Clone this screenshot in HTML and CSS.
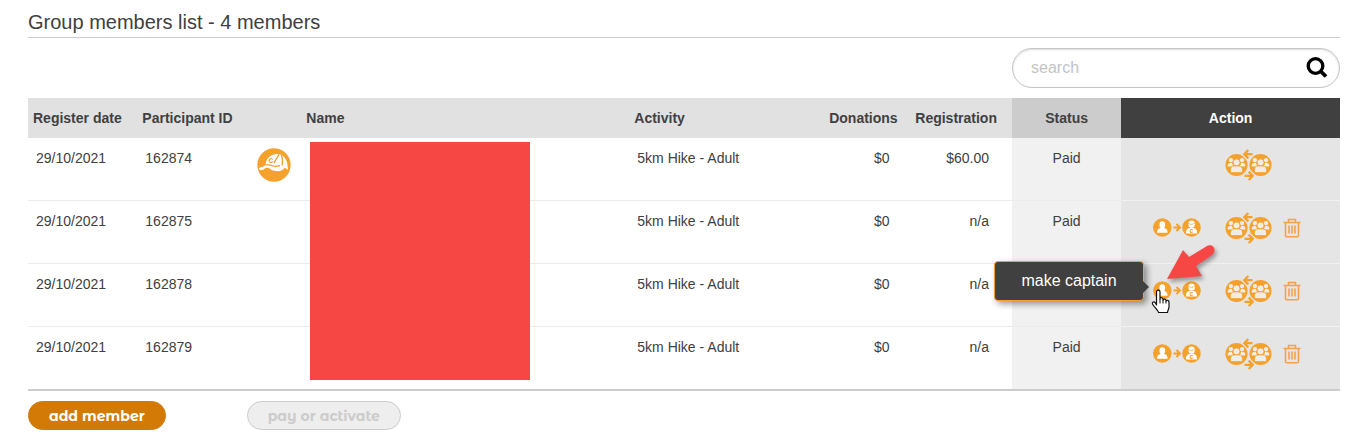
FILE: index.html
```html
<!DOCTYPE html>
<html lang="en">
<head>
    <meta charset="UTF-8">
    <meta name="viewport" content="width=device-width, initial-scale=1.0">
    <title>Group members list</title>
    <link rel="stylesheet" href="styles.css">
</head>
<body>
    <!-- shared icons -->
    <svg class="sprite" aria-hidden="true">
        <symbol id="icon-captain" viewBox="0 0 48 20">
            <circle cx="9.300" cy="9.500" r="9.300" fill="#f5a12b"/>
            <ellipse cx="9.300" cy="6.700" rx="2.900" ry="3.500" fill="#fff"/>
            <path d="M4 14.700c0-3.200 1-4.300 3.500-4.800h3.600c2.500.5 3.500 1.600 3.500 4.800z" fill="#fff"/>
            <path d="M20.500 9.500h6M23.500 6l3.500 3.500-3.500 3.500" fill="none" stroke="#f5a12b" stroke-width="2"/>
            <circle cx="38.500" cy="9.500" r="9.300" fill="#f5a12b"/>
            <path d="M35.300 6c0-2.700 1.500-3.500 3.200-3.500s3.400.8 3.400 3.500l-.5 2.500c-.8 1.800-4.800 1.800-5.600 0z" fill="#fff"/>
            <path d="M35 5.500l3.500 1 3-1.200" fill="none" stroke="#f5a12b" stroke-width=".7"/>
            <path d="M33 15.500c0-3.800 1-5 3.500-5.500h4c2.500.5 3.500 1.700 3.500 5.500z" fill="#fff"/>
            <text x="38.500" y="15" text-anchor="middle" class="icon-letter">c</text>
        </symbol>
        <symbol id="icon-group" viewBox="0 0 24 24">
            <circle cx="12" cy="12" r="11.500" fill="#f5a12b"/>
            <g fill="#f0ece6">
                <circle cx="6.200" cy="6.900" r="2.300"/>
                <circle cx="17.800" cy="6.900" r="2.300"/>
                <path d="M2.800 13.500c0-3 1-3.800 4.200-3.800l1.800 3.800zM21.200 13.500c0-3-1-3.800-4.200-3.800l-1.800 3.800z"/>
            </g>
            <g fill="#f0ece6" stroke="#f5a12b" stroke-width=".8">
                <circle cx="12" cy="9.300" r="3.600"/>
                <path d="M5.800 19.500c-.4-4.500.8-6.300 3.500-6.500h5.400c2.700.2 3.900 2 3.500 6.500-1 .6-11.400.6-12.400 0z"/>
            </g>
        </symbol>
        <symbol id="icon-swap" viewBox="0 0 48 32">
            <use href="#icon-group" x="1" y="4.500" width="23" height="23"/>
            <use href="#icon-group" x="25" y="4.500" width="23" height="23"/>
            <path d="M28.500 5.200h-8M24.300 1l-4.300 4.200 4.300 4.200M20.500 26.800h8M24.700 22.600l4.300 4.200-4.300 4.200" fill="none" stroke="#e5e5e5" stroke-width="4.500"/>
            <path d="M28.500 5.200h-7M24.300 1l-4 4.200 4 4.200M20.500 26.800h7M24.700 22.600l4 4.200-4 4.200" fill="none" stroke="#f5a12b" stroke-width="2.300"/>
        </symbol>
        <symbol id="icon-trash" viewBox="0 0 18 20">
            <path d="M.5 4.500h17M5.500 4.500v-3h7v3M2.500 4.500v13c0 .8.500 1.300 1.300 1.300h10.400c.8 0 1.300-.5 1.300-1.300v-13M6 7.500v8M9 7.500v8M12 7.500v8" fill="none" stroke="#f7a04a" stroke-width="1.600"/>
        </symbol>
    </svg>

    <div class="container">
        <h2>Group members list - 4 members</h2>

        <form class="search">
            <input type="text" placeholder="search" aria-label="search">
            <button type="button" aria-label="Search">
                <svg width="22" height="22" viewBox="0 0 22 22"><circle cx="9.500" cy="9" r="7.300" fill="none" stroke="#000" stroke-width="3.300"/><path d="M14.500 14l5.500 5.500" stroke="#000" stroke-width="3.800"/></svg>
            </button>
        </form>

        <table class="members">
            <colgroup>
                <col class="col-1">
                <col class="col-1">
                <col class="col-half">
                <col class="col-3">
                <col class="col-activity">
                <col class="col-1">
                <col class="col-1">
                <col class="col-1">
                <col class="col-2">
            </colgroup>
            <thead>
                <tr>
                    <th>Register date</th>
                    <th>Participant ID</th>
                    <th></th>
                    <th>Name</th>
                    <th>Activity</th>
                    <th class="donations">Donations</th>
                    <th class="registration">Registration</th>
                    <th class="status">Status</th>
                    <th class="action">Action</th>
                </tr>
            </thead>
            <tbody>
                <tr>
                    <td>29/10/2021</td>
                    <td>162874</td>
                    <td class="cap">
                        <svg width="34" height="34" viewBox="0 0 100 100" role="img" aria-label="Captain">
                            <circle cx="50" cy="50" r="49" fill="#f5a12b"/>
                            <path d="M25 47C29 27 43 17 62 18c20 2 29 22 29 46l-9-6c-8 10-20 12-32 9-9-2-18-10-25-20z" fill="#fff"/>
                            <path d="M5 62c1-5 7-7 12-6 3-4 8-6 14-6l22 6-4 7c-8-5-17-6-24-4-5 6-15 9-20 3z" fill="#fff"/>
                            <path d="M27 49c12 1 20 5 27 5s10-2 14-2M50 44l15-25M72 20c4 12 4 20 2 31" fill="none" stroke="#f5a12b" stroke-width="4"/>
                            <text x="34" y="45" class="cap-letter">c</text>
                        </svg>
                    </td>
                    <td class="name"><div class="redacted"></div></td>
                    <td>5km Hike - Adult</td>
                    <td class="donations">$0</td>
                    <td class="registration">$60.00</td>
                    <td class="status">Paid</td>
                    <td class="action">
                        <div class="actions">
                            <button class="swap" aria-label="change group"><svg width="48" height="32"><use href="#icon-swap"/></svg></button>
                        </div>
                    </td>
                </tr>
                <tr>
                    <td>29/10/2021</td>
                    <td>162875</td>
                    <td></td>
                    <td></td>
                    <td>5km Hike - Adult</td>
                    <td class="donations">$0</td>
                    <td class="registration">n/a</td>
                    <td class="status">Paid</td>
                    <td class="action">
                        <div class="actions">
                            <button class="captain" aria-label="make captain"><svg width="48" height="20"><use href="#icon-captain"/></svg></button>
                            <button class="swap" aria-label="change group"><svg width="48" height="32"><use href="#icon-swap"/></svg></button>
                            <button class="delete" aria-label="delete"><svg width="18" height="20"><use href="#icon-trash"/></svg></button>
                        </div>
                    </td>
                </tr>
                <tr>
                    <td>29/10/2021</td>
                    <td>162878</td>
                    <td></td>
                    <td></td>
                    <td>5km Hike - Adult</td>
                    <td class="donations">$0</td>
                    <td class="registration">n/a</td>
                    <td class="status">Paid</td>
                    <td class="action">
                        <div class="actions">
                            <button class="captain" aria-describedby="tip" aria-label="make captain"><svg width="48" height="20"><use href="#icon-captain"/></svg></button>
                            <button class="swap" aria-label="change group"><svg width="48" height="32"><use href="#icon-swap"/></svg></button>
                            <button class="delete" aria-label="delete"><svg width="18" height="20"><use href="#icon-trash"/></svg></button>
                            <span class="tooltip" id="tip" role="tooltip">make captain</span>
                            <svg class="pointer-arrow" width="56" height="46" viewBox="0 0 56 46">
                                <path d="M3 37L19 8l6 7 18-11c7-3 10 5 5 9L32 24l6 10z" fill="#f64744"/>
                            </svg>
                            <svg class="cursor" width="20" height="26" viewBox="0 0 20 26">
                                <path d="M5.500 16V3c0-2.500 3.500-2.500 3.500 0v7c0-1.800 3-1.700 3 .3v.7c.4-1.500 3-1.200 3 .5v.6c.5-1.400 3-1 3 .9v5c0 2-1.500 3.500-1.500 5.500h-9c0-2-4.500-5.500-6-8.500-.8-2 1.500-3 2.800-1.200z" fill="#fff" stroke="#111" stroke-width="1.200" stroke-linejoin="round"/>
                                <path d="M9 10v4.500M12 11v3.500M15 12v2.500" stroke="#111" stroke-width="1"/>
                            </svg>
                        </div>
                    </td>
                </tr>
                <tr>
                    <td>29/10/2021</td>
                    <td>162879</td>
                    <td></td>
                    <td></td>
                    <td>5km Hike - Adult</td>
                    <td class="donations">$0</td>
                    <td class="registration">n/a</td>
                    <td class="status">Paid</td>
                    <td class="action">
                        <div class="actions">
                            <button class="captain" aria-label="make captain"><svg width="48" height="20"><use href="#icon-captain"/></svg></button>
                            <button class="swap" aria-label="change group"><svg width="48" height="32"><use href="#icon-swap"/></svg></button>
                            <button class="delete" aria-label="delete"><svg width="18" height="20"><use href="#icon-trash"/></svg></button>
                        </div>
                    </td>
                </tr>
            </tbody>
        </table>

        <div class="buttons">
            <div><button class="btn btn-primary">add member</button></div>
            <div><button class="btn" disabled>pay or activate</button></div>
        </div>
    </div>
</body>
</html>
```
FILE: styles.css
```css
* {
    box-sizing: border-box;
}
body {
    margin: 0;
    padding: 8px 29px 0 28px;
    font-family: Arial, "Liberation Sans", sans-serif;
    font-size: 14px;
    line-height: 20px;
    color: #404041;
    background-color: #fff;
}
button {
    padding: 0;
    border: none;
    background: none;
    cursor: pointer;
}
svg {
    display: block;
}
.sprite {
    display: none;
}
h2 {
    margin: 0 0 10px;
    padding-bottom: 1px;
    border-bottom: 1px solid #ccc;
    font-size: 20px;
    font-weight: normal;
    line-height: 28px;
}

/* search */
.search {
    display: flex;
    align-items: center;
    width: 25%;
    height: 40px;
    margin: 0 0 10px auto;
    padding: 0 11px 0 18px;
    border: 1px solid #c4c4c4;
    border-radius: 20px;
    box-shadow: inset 0 1px 2px #ddd;
}
.search input {
    flex: 1;
    min-width: 0;
    padding: 0;
    border: none;
    outline: none;
    background: none;
    font-family: inherit;
    font-size: 16px;
}
.search input::placeholder {
    color: #c4c4c4;
}

/* members table, 12 column grid */
.members {
    width: 100%;
    table-layout: fixed;
    border-collapse: separate;
    border-spacing: 0;
    border-bottom: 2px solid #ccc;
}
.col-half {
    width: 4.1667%;
}
.col-1 {
    width: 8.3333%;
}
.col-activity {
    width: 12.5%;
}
.col-2 {
    width: 16.6667%;
}
.col-3 {
    width: 25%;
}
th {
    height: 40px;
    padding: 0 5px;
    text-align: left;
    background-color: #e1e1e1;
}
td {
    height: 63px;
    padding: 10px 8px 0;
    vertical-align: top;
    border-bottom: 1px solid #ececec;
}
tbody tr:last-child td {
    height: 62px;
    border-bottom: none;
}
.donations {
    text-align: right;
}
td.donations {
    padding-right: 13px;
}
.registration {
    text-align: right;
}
th.registration {
    padding-right: 15px;
}
td.registration {
    padding-right: 23px;
}
.status {
    text-align: center;
    background-color: #f1f1f1;
}
th.status {
    background-color: #ccc;
}
.action {
    text-align: center;
    background-color: #e5e5e5;
}
td.action {
    padding: 10px 0 0 32px;
    border-bottom-color: #f1f1f1;
}
th.action {
    color: #fff;
    background-color: #404041;
}
td.cap {
    padding-left: 10px;
}
.name {
    position: relative;
}
.redacted {
    position: absolute;
    top: 4px;
    left: 9px;
    width: 220px;
    height: 238px;
    background-color: #f64744;
}
.actions {
    position: relative;
    display: grid;
    grid-template-columns: 48px 48px 18px;
    column-gap: 23px;
    align-items: center;
    height: 34px;
}
.captain {
    grid-column: 1;
}
.swap {
    grid-column: 2;
}
.delete {
    grid-column: 3;
    margin-left: -12px;
}
.icon-letter {
    font: bold 7px Arial, "Liberation Sans", sans-serif;
    fill: #f5a12b;
}
.cap-letter {
    font: bold 26px Arial, "Liberation Sans", sans-serif;
    fill: #f5a12b;
}

/* tooltip and pointer */
.tooltip {
    position: absolute;
    right: 196px;
    top: -13px;
    width: 150px;
    height: 40px;
    border: 1px solid #f5a12b;
    border-radius: 4px;
    box-shadow: 3px 3px 6px rgba(0, 0, 0, .4);
    background-color: #404041;
    color: #fff;
    font-size: 16px;
    line-height: 37px;
}
.tooltip::after {
    content: "";
    position: absolute;
    top: 19px;
    left: 148px;
    border: 6px solid transparent;
    border-left-color: #404041;
    border-right: none;
}
.pointer-arrow {
    position: absolute;
    left: 11px;
    top: -32px;
    filter: drop-shadow(2px 3px 2px rgba(0, 0, 0, .35));
}
.cursor {
    position: absolute;
    left: -2px;
    top: 15px;
}

/* buttons under the table */
.buttons {
    display: grid;
    grid-template-columns: repeat(6, 1fr);
    padding: 10px 0;
}
.btn {
    height: 29px;
    padding: 0 20px;
    border: 1px solid #ccc;
    border-radius: 15px;
    background-color: #eee;
    color: #ccc;
    font-family: "Montserrat Alternates", Lato, sans-serif;
    font-size: 14px;
    font-weight: bold;
    white-space: nowrap;
}
.btn-primary {
    border-color: #d27a05;
    background-color: #d27a05;
    color: #fff;
}
```
